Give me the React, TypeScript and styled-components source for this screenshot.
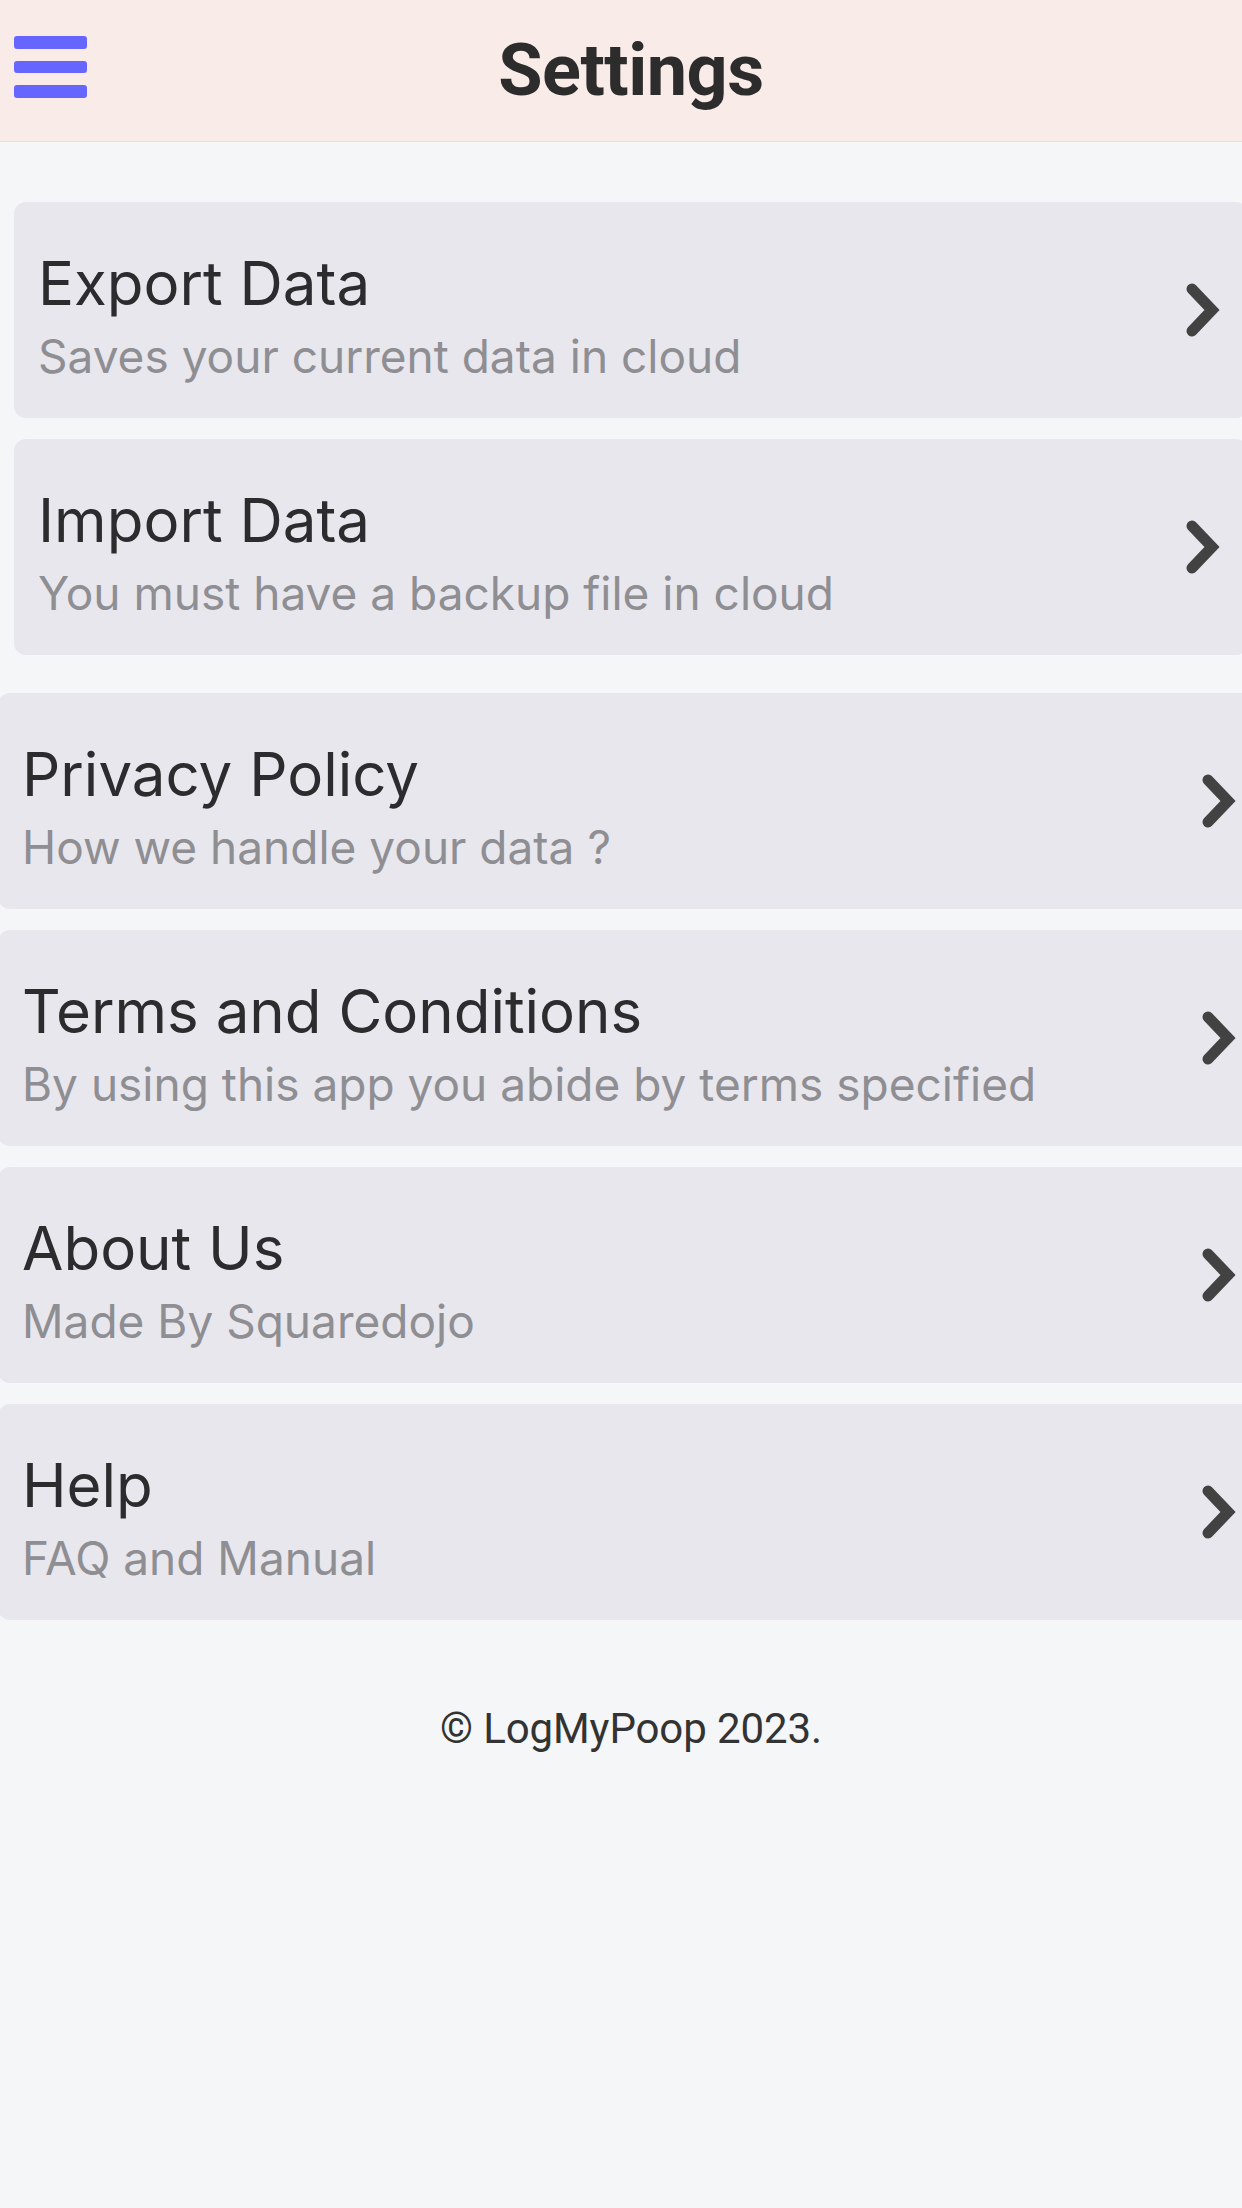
import React from 'react'
import styled, { createGlobalStyle } from 'styled-components'

interface Item {
  title: string
  subtitle: string
}

const dataItems: Item[] = [
  { title: 'Export Data', subtitle: 'Saves your current data in cloud' },
  { title: 'Import Data', subtitle: 'You must have a backup file in cloud' },
]

const infoItems: Item[] = [
  { title: 'Privacy Policy', subtitle: 'How we handle your data ?' },
  { title: 'Terms and Conditions', subtitle: 'By using this app you abide by terms specified' },
  { title: 'About Us', subtitle: 'Made By Squaredojo' },
  { title: 'Help', subtitle: 'FAQ and Manual' },
]

const GlobalStyle = createGlobalStyle`
  html, body {
    margin: 0;
    padding: 0;
    background: #f5f6f8;
    overflow-x: hidden;
  }
  body {
    font-family: Inter, "Liberation Sans", sans-serif;
  }
`

function Chevron(): JSX.Element {
  return (
    <ChevronIcon viewBox="0 0 36 56" aria-hidden="true">
      <polyline points="7,7 27,28 7,49" />
    </ChevronIcon>
  )
}

function SettingsCard(props: Item & { wide?: boolean }): JSX.Element {
  const { title, subtitle, wide } = props
  return (
    <Card $wide={wide}>
      <Texts>
        <Title>{title}</Title>
        <Subtitle>{subtitle}</Subtitle>
      </Texts>
      <Chevron />
    </Card>
  )
}

export default function App(): JSX.Element {
  return (
    <Frame>
      <GlobalStyle />
      <Page>
        <Header>
          <Burger aria-label="menu">
            <span />
            <span />
            <span />
          </Burger>
          <HeaderTitle>Settings</HeaderTitle>
          <div />
        </Header>
        <Content>
          <Section>
            {dataItems.map((item) => (
              <SettingsCard key={item.title} {...item} />
            ))}
          </Section>
          <Section>
            {infoItems.map((item) => (
              <SettingsCard key={item.title} {...item} wide />
            ))}
          </Section>
          <Footer>© LogMyPoop 2023.</Footer>
        </Content>
      </Page>
    </Frame>
  )
}

const Frame = styled.div`
  width: 100%;
  min-height: 100vh;
  overflow: hidden;
  background: #f5f6f8;
`

const Page = styled.div`
  width: 1262px;
`

const Header = styled.header`
  display: grid;
  grid-template-columns: 1fr auto 1fr;
  align-items: center;
  height: 142px;
  padding: 0 14px;
  box-sizing: border-box;
  background: #f9ebe7;
  border-bottom: 1px solid #e6dedb;
`

const Burger = styled.div`
  display: flex;
  flex-direction: column;
  gap: 12px;
  align-self: start;
  margin-top: 36px;

  > span {
    display: block;
    width: 73px;
    height: 12.5px;
    border-radius: 3px;
    background: #6666ff;
  }
`

const HeaderTitle = styled.h1`
  margin: 0;
  font-family: Roboto, "Liberation Sans", sans-serif;
  font-size: 72px;
  line-height: 1;
  font-weight: 700;
  color: #2c2c2c;
  letter-spacing: -0.5px;
`

const Content = styled.main`
  display: flex;
  flex-direction: column;
  padding-top: 60px;
`

const Section = styled.section`
  display: flex;
  flex-direction: column;
  gap: 21px;
  margin-bottom: 38px;

  &:last-of-type {
    margin-bottom: 0;
  }
`

const Card = styled.div<{ $wide?: boolean }>`
  display: flex;
  align-items: center;
  justify-content: space-between;
  height: 216px;
  box-sizing: border-box;
  margin: 0 ${(p) => (p.$wide ? '-2px' : '14px')};
  padding: 0 27px 0 24px;
  border-radius: 12px;
  background: #e8e7ed;
`

const Texts = styled.div`
  display: flex;
  flex-direction: column;
  align-self: flex-start;
  padding-top: 45px;
`

const Title = styled.div`
  font-size: 60px;
  line-height: 72px;
  color: #2c2c2e;
`

const Subtitle = styled.div`
  margin-top: 10px;
  font-size: 46px;
  line-height: 54px;
  color: #8e8e93;
`

const ChevronIcon = styled.svg`
  width: 36px;
  height: 56px;
  flex-shrink: 0;
  fill: none;
  stroke: #424242;
  stroke-width: 11;
  stroke-linecap: round;
  stroke-linejoin: miter;
`

const Footer = styled.footer`
  margin-top: 84px;
  text-align: center;
  font-family: Roboto, "Liberation Sans", sans-serif;
  font-size: 42px;
  line-height: 50px;
  color: #333333;
  letter-spacing: -0.1px;
`
